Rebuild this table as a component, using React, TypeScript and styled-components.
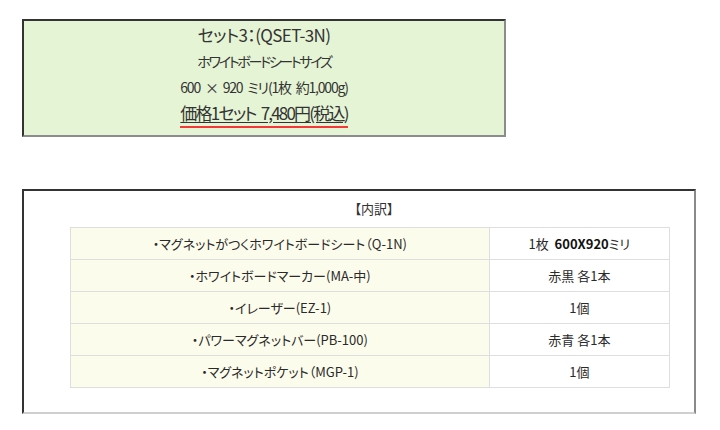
import styled, { createGlobalStyle } from "styled-components";

const GlobalStyle = createGlobalStyle`
	body {
		margin: 0;
		background: #fff;
		font-family: "Noto Sans CJK JP", "Noto Sans", sans-serif;
		color: #333;
	}
`;

const Page = styled.div`
	display: flex;
	flex-direction: column;
	align-items: flex-start;
	padding: 19px 0 0 22px;
	gap: 52px;
`;

const SetBox = styled.div`
	box-sizing: border-box;
	width: 484px;
	padding: 1px 0 9px;
	background-color: #e5f4d5;
	border-top: 2px solid #333;
	border-left: 2px solid #333;
	border-right: 2px solid #8c8c8c;
	border-bottom: 2px solid #8c8c8c;
	text-align: center;
	font-feature-settings: "palt";
`;

const Line = styled.div<{ $size: number; $spacing: number }>`
	font-size: ${({ $size }) => $size}px;
	letter-spacing: ${({ $spacing }) => $spacing}px;
	word-spacing: 3px;
	line-height: 26px;
`;

const Price = styled.span`
	text-decoration: underline;
	text-underline-offset: 2px;
	border-bottom: 2px solid #f43838;
	padding-bottom: 1px;
`;

const DetailBox = styled.div`
	box-sizing: border-box;
	width: 674px;
	padding: 8px 24px 24px 46px;
	border-top: 2px solid #333;
	border-left: 2px solid #333;
	border-right: 2px solid #8a8a8a;
	border-bottom: 2px solid #cfcfcf;
	font-feature-settings: "palt";
`;

const Heading = styled.div`
	text-align: center;
	font-size: 13px;
	line-height: 20px;
	margin-bottom: 8px;
	padding-left: 8px;
`;

const Table = styled.table`
	width: 600px;
	border-collapse: collapse;
	font-size: 13px;
	color: #2a2a2a;
`;

const Cell = styled.td<{ $item?: boolean }>`
	height: 31px;
	padding: 0;
	text-align: center;
	border: 1px solid #dedede;
	background-color: ${({ $item }) => ($item ? "#fcfcec" : "#fff")};
	width: ${({ $item }) => ($item ? "420px" : "180px")};
	b {
		font-weight: bold;
		color: #111;
	}
`;

const rows = [
	{ item: "・マグネットがつくホワイトボードシート（Q-1N)", qty: null },
	{ item: "・ホワイトボードマーカー(MA-中)", qty: "赤黒 各1本" },
	{ item: "・イレーザー(EZ-1)", qty: "1個" },
	{ item: "・パワーマグネットバー(PB-100)", qty: "赤青 各1本" },
	{ item: "・マグネットポケット（MGP-1)", qty: "1個" },
];

const App = () => {
	return (
		<>
			<GlobalStyle />
			<Page>
				<SetBox>
					<Line $size={17} $spacing={-0.6}>
						セット3：(QSET-3N)
					</Line>
					<Line $size={14} $spacing={-2.3}>
						ホワイトボードシートサイズ
					</Line>
					<Line $size={14} $spacing={-1.2}>
						600 × 920 ミリ(1枚 約1,000g)
					</Line>
					<Line $size={17} $spacing={-1.8}>
						<Price>価格1セット 7,480円(税込)</Price>
					</Line>
				</SetBox>
				<DetailBox>
					<Heading>【内訳】</Heading>
					<Table>
						<tbody>
							{rows.map((row) => (
								<tr key={row.item}>
									<Cell $item>{row.item}</Cell>
									<Cell>
										{row.qty === null ? (
											<>
												1枚&nbsp; <b>600X920</b>ミリ
											</>
										) : (
											row.qty
										)}
									</Cell>
								</tr>
							))}
						</tbody>
					</Table>
				</DetailBox>
			</Page>
		</>
	);
};

export default App;
